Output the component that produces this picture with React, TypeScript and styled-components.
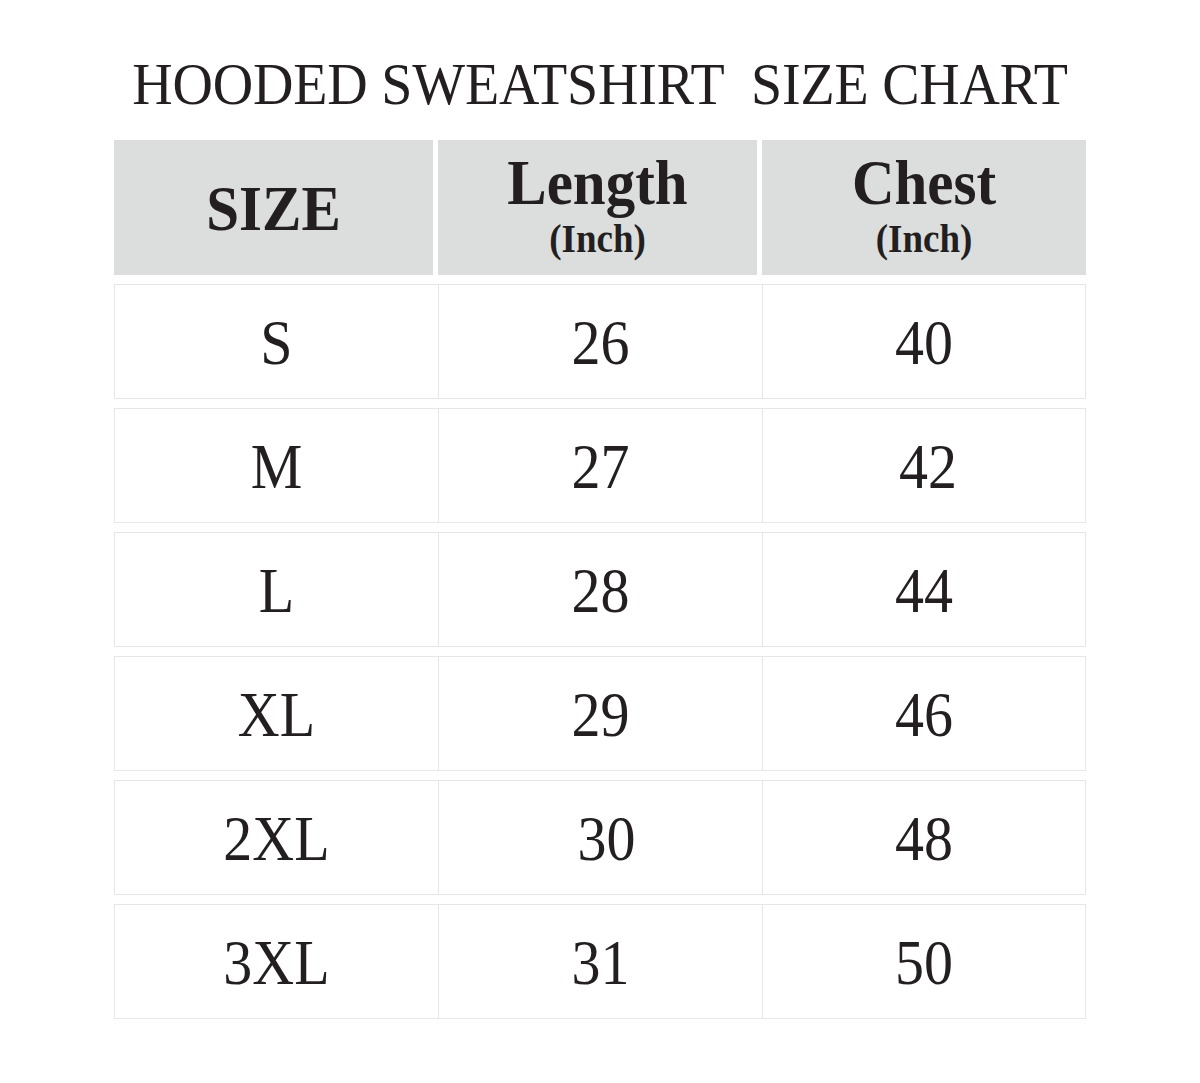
import React from "react";
import styled, { createGlobalStyle } from "styled-components";

const Global = createGlobalStyle`
  html, body { margin: 0; padding: 0; background: #ffffff; }
  body { font-family: "Liberation Serif", "Times New Roman", serif; color: #231f20; }
`;

const Page = styled.div`
  width: 1200px;
  min-height: 1083px;
  display: flex;
  flex-direction: column;
  align-items: center;
  padding-top: 56px;
  box-sizing: border-box;
`;

const Title = styled.h1`
  margin: 0 0 28px;
  font-weight: 400;
  font-size: 56px;
  line-height: 1;
  letter-spacing: -0.2px;
  white-space: pre;
  transform: scaleY(1.04);
`;

const Chart = styled.div`
  width: 972px;
  display: flex;
  flex-direction: column;
  gap: 9px;
`;

const HeaderRow = styled.div`
  display: grid;
  grid-template-columns: 319px 319px 1fr;
  column-gap: 5px;
  height: 135px;
`;

const HeaderCell = styled.div`
  background: #dcdddd;
  display: flex;
  flex-direction: column;
  align-items: center;
  justify-content: center;
  padding-bottom: 6px;
  box-sizing: border-box;
`;

const HeadMain = styled.div<{ $single?: boolean }>`
  font-weight: 700;
  font-size: 59px;
  line-height: 1;
  transform: scaleY(1.08);
  margin-top: ${(p) => (p.$single ? "8px" : "0")};
`;

const HeadSub = styled.div`
  font-weight: 700;
  font-size: 37px;
  line-height: 1;
  margin-top: 8px;
  transform: scaleY(1.06);
`;

const Row = styled.div`
  display: grid;
  grid-template-columns: 324px 324px 1fr;
  height: 115px;
  border: 1px solid #e6e6e6;
  box-sizing: border-box;
`;

const Cell = styled.div<{ $shift?: number }>`
  display: flex;
  align-items: center;
  justify-content: center;
  border-right: 1px solid #e6e6e6;
  padding-left: ${(p) => (p.$shift ?? 0) * 2}px;
  &:last-child { border-right: none; }
`;

const Value = styled.span`
  font-size: 58px;
  line-height: 1;
  transform: scaleY(1.09);
  padding-top: 2px;
`;

type Item = { size: string; length: string; chest: string; lShift?: number; cShift?: number };

const rows: Item[] = [
  { size: "S", length: "26", chest: "40" },
  { size: "M", length: "27", chest: "42", cShift: 4 },
  { size: "L", length: "28", chest: "44" },
  { size: "XL", length: "29", chest: "46" },
  { size: "2XL", length: "30", chest: "48", lShift: 6 },
  { size: "3XL", length: "31", chest: "50" },
];

export default function App() {
  return (
    <>
      <Global />
      <Page>
        <Title>{"HOODED SWEATSHIRT  SIZE CHART"}</Title>
        <Chart>
          <HeaderRow>
            <HeaderCell>
              <HeadMain $single>SIZE</HeadMain>
            </HeaderCell>
            <HeaderCell>
              <HeadMain>Length</HeadMain>
              <HeadSub>(Inch)</HeadSub>
            </HeaderCell>
            <HeaderCell>
              <HeadMain>Chest</HeadMain>
              <HeadSub>(Inch)</HeadSub>
            </HeaderCell>
          </HeaderRow>
          {rows.map((r) => (
            <Row key={r.size}>
              <Cell>
                <Value>{r.size}</Value>
              </Cell>
              <Cell $shift={r.lShift}>
                <Value>{r.length}</Value>
              </Cell>
              <Cell $shift={r.cShift}>
                <Value>{r.chest}</Value>
              </Cell>
            </Row>
          ))}
        </Chart>
      </Page>
    </>
  );
}
